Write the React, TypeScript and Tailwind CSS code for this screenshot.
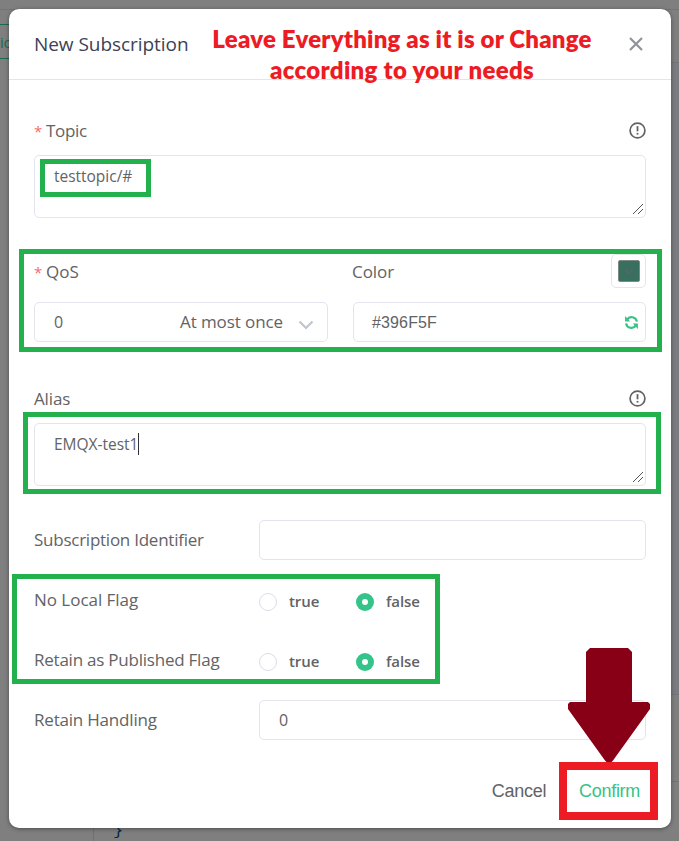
import type { ReactNode } from 'react';

const sans = "font-['Open_Sans','Noto_Sans',sans-serif]";
const arial = "font-['Liberation_Sans',Arial,sans-serif]";

function Label({ children, required = false, tracking = 'tracking-[-0.2px]' }: { children: ReactNode; required?: boolean; tracking?: string }) {
  return (
    <span className={`flex items-center text-[17px] leading-6 text-[#626365] whitespace-nowrap ${tracking}`}>
      {required && <span className="w-3 text-[15px] text-[#f56c6c]">*</span>}
      <span>{children}</span>
    </span>
  );
}

function InfoIcon() {
  return (
    <svg className="block size-[17px]" viewBox="0 0 17 17" fill="none">
      <circle cx="8.5" cy="8.5" r="7.4" stroke="#606266" strokeWidth="1.7" />
      <path d="M8.5 4.1v5.2" stroke="#606266" strokeWidth="1.8" />
      <path d="M8.5 10.9v1.7" stroke="#606266" strokeWidth="1.8" />
    </svg>
  );
}

function Textarea({ children, caret = false }: { children: ReactNode; caret?: boolean }) {
  return (
    <div className="flex h-[63px] items-end justify-between rounded-[5px] border border-[#e3e4ef] bg-white">
      <div className="flex h-full items-start pt-[9px] pl-[19px] text-[15.5px] leading-[22px] tracking-[-0.02px] text-[#626365]">
        <span>{children}</span>
        {caret && <span className="h-[22px] w-px bg-[#303133]" />}
      </div>
      <svg className="mr-[2px] mb-[2px] block size-[11px]" viewBox="0 0 11 11" shapeRendering="crispEdges">
        <path d="M0.5 10.5 10.5 0.5M5.5 10.5 10.5 5.5" stroke="#555" strokeWidth="1" />
      </svg>
    </div>
  );
}

function Radio({ label, checked = false }: { label: string; checked?: boolean }) {
  return (
    <div className="flex items-center">
      <span
        className={
          checked
            ? 'flex size-[18px] items-center justify-center rounded-full bg-[#34c388]'
            : 'size-[18px] rounded-full border border-[#dcdee8] bg-white'
        }
      >
        {checked && <span className="size-[6px] rounded-full bg-white" />}
      </span>
      <span className="mb-[2px] ml-3 text-[15px] leading-5 font-semibold tracking-[-0.1px] text-[#626365]">{label}</span>
    </div>
  );
}

function FlagRow({ label, tracking }: { label: string; tracking: string }) {
  return (
    <div className="mt-5 flex h-10 items-center">
      <div className="w-[225px]">
        <Label tracking={tracking}>{label}</Label>
      </div>
      <div className="flex pt-1">
        <div className="w-[97px]">
          <Radio label="true" />
        </div>
        <Radio label="false" checked />
      </div>
    </div>
  );
}

function Backdrop() {
  return (
    <div className="absolute inset-0 overflow-hidden bg-[#7f7f7f]">
      <div className="absolute top-0 right-0 left-0 h-[10px] border-b border-[#747474]" />
      <div className="absolute top-[62px] right-0 h-[633px] w-[20px] border-y border-[#727478] bg-[#7b7c7f]" />
      <div className="absolute top-[781px] right-0 h-px w-[20px] bg-[#727375]" />
      <div className="absolute top-[24px] left-0 flex h-[35px] w-[40px] items-center border-y border-[#1a6b49] text-[15px] leading-5 tracking-[-0.4px] text-[#1a6b49]">
        ic
      </div>
      <div className="absolute top-[820px] left-[93px] h-[21px] w-px bg-[#707070]" />
      <div className="absolute top-[821px] left-[113px] font-['Liberation_Mono',monospace] text-[17px] leading-[20px] text-[#02294a]">{'}'}</div>
    </div>
  );
}

function Annotations() {
  return (
    <div className="pointer-events-none absolute inset-0">
      <div className="absolute top-[23px] left-[202px] w-[400px] text-center font-['Lato',sans-serif] text-[24px] leading-[32px] font-extrabold text-[#ed1c24]">
        <div className="tracking-[0.2px] whitespace-nowrap">Leave Everything as it is or Change</div>
        <div className="-mt-px tracking-[0.31px] whitespace-nowrap">according to your needs</div>
      </div>
      <div className="absolute top-[159px] left-[40px] h-[38px] w-[111px] border-5 border-[#22b14c]" />
      <div className="absolute top-[249px] left-[19px] h-[103px] w-[643px] border-5 border-[#22b14c]" />
      <div className="absolute top-[412px] left-[23px] h-[82px] w-[638px] border-5 border-[#22b14c]" />
      <div className="absolute top-[574px] left-[12px] h-[110px] w-[428px] border-5 border-[#22b14c]" />
      <svg className="absolute top-[648px] left-[568px] block h-[115px] w-[82px]" viewBox="0 0 82 115">
        <path d="M22 0H60L64 4V54H80L82 56V61L45 112.5L42.5 115H39.5L37 112.5L0 61V56L2 54H18V4Z" fill="#880015" />
      </svg>
      <div className="absolute top-[762px] left-[559px] h-[58px] w-[99px] border-8 border-[#ed1c24]" />
    </div>
  );
}

export default function App() {
  return (
    <div className={`relative h-[841px] w-[679px] overflow-hidden p-[9px] pr-2 ${sans}`}>
      <Backdrop />
      <div className="relative h-[819px] w-[662px] rounded-[10px] bg-white shadow-[0_1px_4px_rgba(0,0,0,0.4)]">
        <header className="flex h-[71px] items-center justify-between border-b border-[#e3e4ef] pr-[27px] pl-[25px]">
          <h1 className="text-[19px] leading-7 tracking-[-0.05px] text-[#3b4256]">New Subscription</h1>
          <svg className="block size-[16px]" viewBox="0 0 16 16">
            <path d="M2 2 14 14M14 2 2 14" stroke="#909399" strokeWidth="2.2" />
          </svg>
        </header>

        <main className="px-[25px]">
          <div className="mt-[26px] flex h-[49px] items-center justify-between">
            <Label required tracking="tracking-[-0.3px]">Topic</Label>
            <InfoIcon />
          </div>
          <Textarea>testtopic/#</Textarea>

          <div className="mt-[36px] grid grid-cols-[294px_293px] justify-between">
            <div>
              <div className="mb-[14px] flex h-[34px] items-center pt-px">
                <Label required tracking="tracking-[0.05px]">QoS</Label>
              </div>
              <div className="flex h-10 items-center rounded-[5px] border border-[#e3e4ef] pr-[13px] pl-[19px] text-[17px] text-[#626365]">
                <span className="text-[16px]">0</span>
                <span className="ml-auto tracking-[-0.09px]">At most once</span>
                <svg className="mt-[5px] ml-[15px] block h-[10px] w-[16px]" viewBox="0 0 16 10" fill="none">
                  <path d="M1.5 1.5 8 8 14.5 1.5" stroke="#c0c4cc" strokeWidth="2.2" />
                </svg>
              </div>
            </div>
            <div>
              <div className="mb-[14px] flex h-[34px] items-center justify-between">
                <div className="-ml-px pt-px">
                  <Label tracking="tracking-[-0.08px]">Color</Label>
                </div>
                <div className="flex h-[34px] w-[35px] items-center justify-center rounded-[5px] border border-[#e6e6e6]">
                  <div className="flex size-[22px] items-center justify-center rounded-[2px] border border-[#7c8985] bg-[#396f5f]">
                    <svg className="block h-[6px] w-[10px]" viewBox="0 0 10 6" fill="none">
                      <path d="M1 1 5 5 9 1" stroke="#606266" strokeWidth="1.3" />
                    </svg>
                  </div>
                </div>
              </div>
              <div className={`flex h-10 items-center justify-between rounded-[5px] border border-[#e3e4ef] pr-[6px] pl-[18px] text-[16px] tracking-[0.14px] text-[#626365] ${arial}`}>
                <span className="pt-[2px]">#396F5F</span>
                <svg className="block size-[15px]" viewBox="0 0 15 15" fill="none">
                  <path d="M3 4.6A5.4 5.4 0 0 1 12.9 6.7M12 10.4A5.4 5.4 0 0 1 2.1 8.3" stroke="#34c388" strokeWidth="2.2" />
                  <path d="M1.1 1V6.4H6.2ZM13.9 14V8.6H8.8Z" fill="#34c388" />
                </svg>
              </div>
            </div>
          </div>

          <div className="mt-8 flex h-[49px] items-center justify-between">
            <Label tracking="tracking-[-0.15px]">Alias</Label>
            <InfoIcon />
          </div>
          <Textarea caret>EMQX-test1</Textarea>

          <div className="mt-[34px] flex h-10 items-center">
            <div className="w-[225px]">
              <Label tracking="tracking-[-0.25px]">Subscription Identifier</Label>
            </div>
            <div className="h-10 flex-1 rounded-[5px] border border-[#e3e4ef]" />
          </div>
          <FlagRow label="No Local Flag" tracking="tracking-[-0.03px]" />
          <FlagRow label="Retain as Published Flag" tracking="tracking-[-0.23px]" />
          <div className="mt-5 flex h-10 items-center">
            <div className="w-[225px]">
              <Label tracking="tracking-[-0.2px]">Retain Handling</Label>
            </div>
            <div className="flex h-10 flex-1 items-center rounded-[5px] border border-[#e3e4ef] pl-[19px] text-[16px] text-[#626365]">0</div>
          </div>
        </main>

        <footer className={`mt-[30px] flex h-[42px] items-center justify-end gap-[33px] pr-[31px] text-[18px] tracking-[-0.3px] ${arial}`}>
          <button className="text-[#626365]">Cancel</button>
          <button className="text-[#34c388]">Confirm</button>
        </footer>
      </div>
      <Annotations />
    </div>
  );
}
